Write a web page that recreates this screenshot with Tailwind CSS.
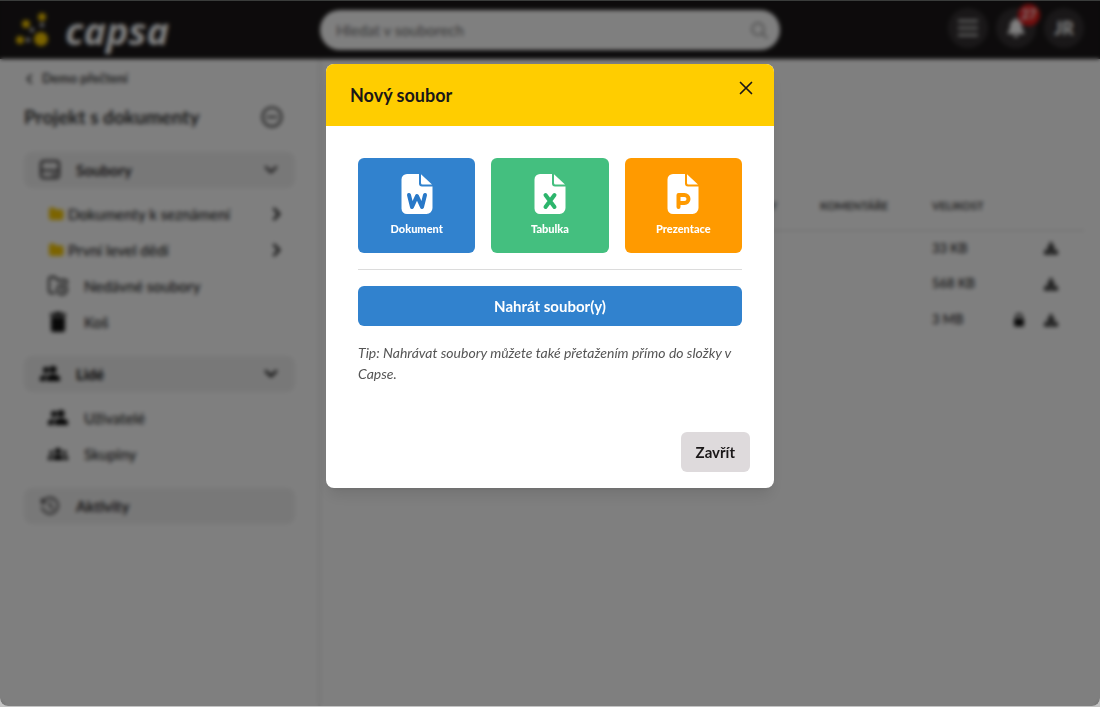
<!DOCTYPE html>
<html lang="cs">
<head>
<meta charset="utf-8">
<meta name="viewport" content="width=device-width, initial-scale=1">
<title>Capsa – Nový soubor</title>
<script src="https://cdn.jsdelivr.net/npm/@tailwindcss/browser@4"></script>
</head>
<body class="min-h-screen bg-[#c4c4c4] pb-px font-['Lato','Noto_Sans',sans-serif] text-[#2b282a]">
<svg class="hidden" aria-hidden="true">
  <symbol id="users" viewBox="0 0 20 16"><circle cx="6" cy="4" r="3"/><circle cx="13" cy="3.500" r="3.500"/><path d="M0 15v-2c0-3 3-4 6-4l1 .2C5.500 10.500 5 12 5 15zM6.500 15v-2.500C6.500 9.500 10 8.500 13 8.500s7 1 7 4V15z"/></symbol>
  <symbol id="download" viewBox="0 0 16 16"><path d="M6.500 2h3v4.500H13L8 12 3 6.500h3.500z"/><path d="M2 10h2.500L8 12.500l3.500-2.500H14l1 2v2.500H1V12z"/></symbol>
  <symbol id="folder" viewBox="0 0 16 16"><path d="M1 3.500a2 2 0 0 1 2-2h3l2 2h5.500a2 2 0 0 1 2 2V12a2 2 0 0 1-2 2H3a2 2 0 0 1-2-2z"/></symbol>
  <symbol id="chevron" viewBox="0 0 14 14"><path d="M4.500 2.500L9 7l-4.500 4.500" fill="none" stroke="currentColor" stroke-width="2" stroke-linecap="round" stroke-linejoin="round"/></symbol>
  <symbol id="page" viewBox="0 0 32 42"><path d="M6 1h12v9.500a3 3 0 0 0 3 3h10.500V35a6 6 0 0 1-6 6H6a5.500 5.500 0 0 1-5.500-5.500v-29A5.500 5.500 0 0 1 6 1z"/><path d="M20 1.200L31 11.500H21.500a1.500 1.500 0 0 1-1.500-1.500z"/></symbol>
</svg>

<div class="flex min-h-[calc(100vh-1px)] flex-col overflow-hidden rounded-b-lg bg-white">
  <header class="grid h-[59px] grid-cols-[1fr_460px_1fr] items-center bg-[#1a1718] px-4 pt-px">
    <a href="#" aria-label="capsa" class="flex items-center gap-[15px] text-white">
      <svg class="h-9 w-[34px]" viewBox="0 0 34 36"><g fill="#f8c800"><circle cx="4" cy="28" r="4"/><circle cx="10" cy="12" r="4"/><circle cx="26" cy="5" r="4"/><circle cx="25" cy="27" r="7"/></g><g fill="#ccc"><circle cx="12" cy="28" r="2.300"/><circle cx="16" cy="18" r="2.300"/><circle cx="26" cy="13" r="2.300"/></g></svg>
      <span class="font-['Noto_Sans',sans-serif] text-[38px] leading-9 font-bold italic">capsa</span>
    </a>
    <form role="search" class="flex h-10 items-center rounded-full bg-white pr-3 pl-4">
      <input type="search" aria-label="Hledat v souborech" placeholder="Hledat v souborech" class="min-w-0 flex-1 text-[15px] font-medium outline-none placeholder:text-[#777]">
      <button type="submit" aria-label="Hledat"><svg class="size-[18px] text-[#888]" viewBox="0 0 18 18" fill="none" stroke="currentColor" stroke-width="1.500" stroke-linecap="round"><circle cx="8" cy="8" r="6"/><path d="M12.500 12.500L17 17"/></svg></button>
    </form>
    <div class="flex justify-end gap-2 pb-1">
      <button aria-label="Menu" class="flex size-10 items-center justify-center rounded-full bg-[#343032] text-[#ccc]"><svg class="size-5" viewBox="0 0 20 20" stroke="currentColor" stroke-width="2.500"><path d="M0 3h20M0 10h20M0 17h20"/></svg></button>
      <button aria-label="Oznámení" class="relative flex size-10 items-center justify-center rounded-full bg-[#343032] text-white"><svg class="size-5" viewBox="0 0 20 20" fill="currentColor"><path d="M10 0c1 0 1.600.8 1.600 1.700C14.500 2.500 16 5 16 8c0 3.500 1 5 2.500 6.500V16h-17v-1.500C3 13 4 11.500 4 8c0-3 1.500-5.500 4.400-6.300C8.400.8 9 0 10 0zM7.500 17h5a2.500 2.500 0 0 1-5 0z"/></svg><span class="absolute -top-1 -right-1 flex size-[22px] items-center justify-center rounded-full bg-[#e41c1c] text-[13px] font-bold">27</span></button>
      <button aria-label="Profil JR" class="size-10 rounded-full bg-[#343032] text-lg font-black text-white">JR</button>
    </div>
  </header>

  <div class="flex flex-1">
    <aside class="w-80 shrink-0 border-r-2 border-[#eee] py-2 pr-[23px] pl-6 shadow-sm">
      <a href="#" class="flex h-6 items-center gap-[7px] text-[13px] font-bold text-[#444]"><svg class="-ml-px size-3 rotate-180 text-[#222]"><use href="#chevron"/></svg>Demo přečtení</a>
      <div class="mt-2 flex h-9 items-center justify-between pr-3">
        <h1 class="text-[19px] font-bold text-[#333]">Projekt s dokumenty</h1>
        <button aria-label="Sbalit"><svg class="size-[22px] text-[#333]" viewBox="0 0 22 22" fill="none" stroke="currentColor" stroke-width="2"><circle cx="11" cy="11" r="9.500"/><path d="M5.500 11h11"/></svg></button>
      </div>
      <nav class="mt-[17px] flex flex-col gap-4 text-[15px]">
        <section>
          <button class="flex h-9 w-full items-center rounded-lg bg-[#f1f1f1] px-4 text-left font-bold"><svg class="mr-4 size-5" viewBox="0 0 20 20" fill="none" stroke="currentColor" stroke-width="2"><rect x="1" y="1" width="18" height="17" rx="3"/><path d="M1 10.500h18M12 14.500h4"/></svg>Soubory<svg class="ml-auto size-4 rotate-90"><use href="#chevron"/></svg></button>
          <ul class="mt-2 pr-2.5 pl-6 font-medium text-[#222]">
            <li><a href="#" class="flex h-9 items-center gap-1"><svg class="size-4 fill-[#f8c800]"><use href="#folder"/></svg>Dokumenty k seznámení<svg class="ml-auto size-4 text-black"><use href="#chevron"/></svg></a></li>
            <li><a href="#" class="flex h-9 items-center gap-1"><svg class="size-4 fill-[#f8c800]"><use href="#folder"/></svg>První level dědí<svg class="ml-auto size-4 text-black"><use href="#chevron"/></svg></a></li>
            <li><a href="#" class="flex h-9 items-center gap-4"><svg class="size-5" viewBox="0 0 20 20" fill="none" stroke="currentColor" stroke-width="1.800"><path d="M7 17H3a2 2 0 0 1-2-2V3a2 2 0 0 1 2-2h4l2 3h8a2 2 0 0 1 2 2v2"/><circle cx="14" cy="13.500" r="5"/><path d="M14 11v3h2"/></svg>Nedávné soubory</a></li>
            <li><a href="#" class="flex h-9 items-center gap-4"><svg class="size-5 text-[#111]" viewBox="0 0 20 20" fill="currentColor"><path d="M7 0h6l1 1.500h4v2.500H2V1.500h4zM3 5h14v13a2 2 0 0 1-2 2H5a2 2 0 0 1-2-2z"/></svg>Koš</a></li>
          </ul>
        </section>
        <section>
          <button class="flex h-9 w-full items-center rounded-lg bg-[#f1f1f1] px-4 text-left font-bold text-black"><svg class="mr-4 h-4 w-5 fill-black"><use href="#users"/></svg>Lidé<svg class="ml-auto size-4 rotate-90"><use href="#chevron"/></svg></button>
          <ul class="mt-2 pl-6 font-medium text-[#222]">
            <li><a href="#" class="flex h-9 items-center gap-4"><svg class="h-4 w-5 fill-black"><use href="#users"/></svg>Uživatelé</a></li>
            <li><a href="#" class="flex h-9 items-center gap-4"><svg class="h-3 w-5 fill-black" viewBox="0 0 20 12"><circle cx="10" cy="3" r="3"/><circle cx="3.500" cy="4.500" r="2"/><circle cx="16.500" cy="4.500" r="2"/><path d="M5 12V9.500C5 7.500 8 7 10 7s5 .5 5 2.500V12zM0 12V9.500C0 8 2 7.300 4.200 7.500 3.700 8.500 3.600 9 3.600 12zM20 12V9.500C20 8 18 7.300 15.800 7.500c.5 1 .6 1.500.6 4.500z"/></svg>Skupiny</a></li>
          </ul>
        </section>
        <a href="#" class="flex h-9 items-center rounded-lg bg-[#f1f1f1] px-4 font-bold"><svg class="mr-4 size-5" viewBox="0 0 20 20" fill="none" stroke="currentColor" stroke-width="1.700"><path d="M2.500 6.500A8 8 0 1 1 2 11M2 2.500v4.500h4.500M10 5.500v5l3.500 2"/></svg>Aktivity</a>
      </nav>
    </aside>

    <main class="min-w-0 flex-1 px-4 pt-[123px]">
      <table class="w-full table-fixed text-left text-[13px] font-medium text-[#222]">
        <thead class="border-b border-[#d8d8d8] text-[11px] text-[#444]">
          <tr class="h-12"><th class="pr-[43px] text-right">Y</th><th class="w-28">KOMENTÁŘE</th><th class="w-20">VELIKOST</th><th class="w-[72px]" aria-label="Akce"></th></tr>
        </thead>
        <tbody>
          <tr class="h-9"><td></td><td></td><td>33 KB</td><td><div class="flex justify-end pr-[25px]"><button aria-label="Stáhnout"><svg class="size-4 fill-[#222]"><use href="#download"/></svg></button></div></td></tr>
          <tr class="h-9"><td></td><td></td><td>568 KB</td><td><div class="flex justify-end pr-[25px]"><button aria-label="Stáhnout"><svg class="size-4 fill-[#222]"><use href="#download"/></svg></button></div></td></tr>
          <tr class="h-9"><td></td><td></td><td>3 MB</td><td><div class="flex justify-end gap-4 pr-[25px]"><button aria-label="Zamčeno"><svg class="size-4" viewBox="0 0 16 16"><path d="M5 7V5a3 3 0 0 1 6 0v2" fill="none" stroke="#111" stroke-width="1.500"/><rect x="3" y="6.500" width="10" height="8" rx="1.500" fill="#111"/></svg></button><button aria-label="Stáhnout"><svg class="size-4 fill-[#222]"><use href="#download"/></svg></button></div></td></tr>
        </tbody>
      </table>
    </main>
  </div>
</div>

<div class="fixed inset-x-0 top-0 bottom-px flex items-start justify-center overflow-auto rounded-b-lg border-t border-[#3a3c3b] bg-black/50 pt-[63px] backdrop-blur-[2px]">
  <div role="dialog" aria-modal="true" aria-labelledby="dialog-title" class="w-full max-w-md overflow-hidden rounded-lg bg-white shadow-lg">
    <div class="flex items-start justify-between bg-[#ffcd00] px-6 py-4 text-[#1a1718]">
      <h2 id="dialog-title" class="text-lg leading-[30px] font-bold">Nový soubor</h2>
      <button aria-label="Zavřít okno" class="-mt-1 flex size-6 items-center justify-center -mr-2 mx-0"><svg class="size-4" viewBox="0 0 16 16" stroke="currentColor" stroke-width="1.700" stroke-linecap="round"><path d="M2.500 2.500l11 11M13.500 2.500l-11 11"/></svg></button>
    </div>
    <div class="p-8">
      <div class="grid grid-cols-3 gap-4 text-[11px] leading-4 font-black text-white">
        <button class="flex flex-col items-center gap-1.5 rounded-md bg-[#3182ce] pt-[15px] pb-4"><svg class="h-[42px] w-8" viewBox="0 0 32 42"><use href="#page" fill="white"/><path d="M8 22l3 12 5-11 5 11 3-12" fill="none" stroke="#2878c8" stroke-width="4" stroke-linecap="round" stroke-linejoin="round"/></svg>Dokument</button>
        <button class="flex flex-col items-center gap-1.5 rounded-md bg-[#44bf7f] pt-[15px] pb-4"><svg class="h-[42px] w-8" viewBox="0 0 32 42"><use href="#page" fill="white"/><path d="M11.500 22l9 12M20.500 22l-9 12" fill="none" stroke="#2cb56c" stroke-width="4" stroke-linecap="round"/></svg>Tabulka</button>
        <button class="flex flex-col items-center gap-1.5 rounded-md bg-[#ff9a00] pt-[15px] pb-4"><svg class="h-[42px] w-8" viewBox="0 0 32 42"><use href="#page" fill="white"/><path d="M11.500 34V22h6a4 4 0 0 1 0 8h-6" fill="none" stroke="#ff9a00" stroke-width="4" stroke-linecap="round" stroke-linejoin="round"/></svg>Prezentace</button>
      </div>
      <hr class="my-4 border-[#dcdcdc]">
      <button class="h-10 w-full rounded-md bg-[#3182ce] text-[15px] font-bold text-white">Nahrát soubor(y)</button>
      <p class="mt-4 text-sm leading-[21px] text-[#555] italic">Tip: Nahrávat soubory můžete také přetažením přímo do složky v Capse.</p>
    </div>
    <div class="flex justify-end px-6 pt-4 pb-4">
      <button class="h-10 rounded-md bg-[#dedadc] px-[15px] text-[15px] font-bold text-[#1a1718]">Zavřít</button>
    </div>
  </div>
</div>
</body>
</html>
